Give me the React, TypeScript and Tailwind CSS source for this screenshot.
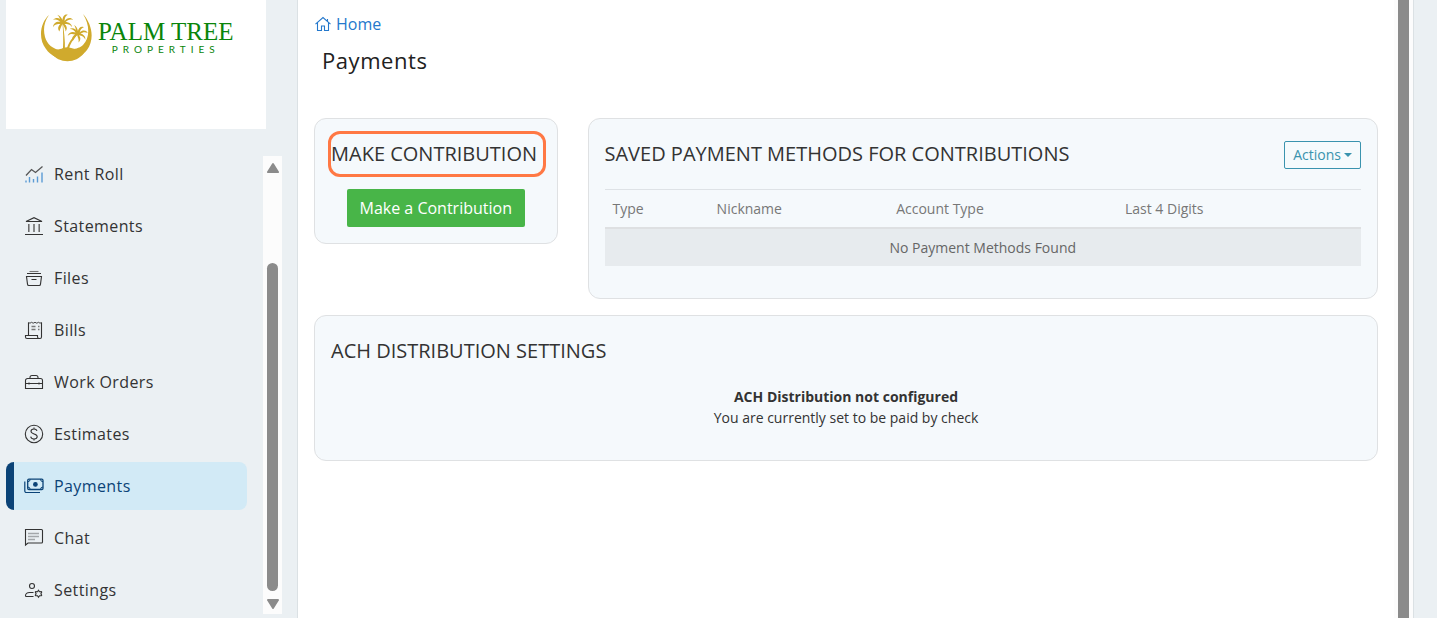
import clsx from "clsx";
import type { ReactNode } from "react";

type NavItem = {
  label: string;
  icon: ReactNode;
  active?: boolean;
};

function Icon({ children }: { children: ReactNode }) {
  return (
    <svg
      viewBox="0 0 20 20"
      className="size-5 shrink-0"
      fill="none"
      stroke="currentColor"
      strokeWidth="1.1"
      aria-hidden="true"
    >
      {children}
    </svg>
  );
}

const navItems: NavItem[] = [
  {
    label: "Rent Roll",
    icon: (
      <Icon>
        <path d="M2 11.5 7.5 5.5l4 3 7-6" strokeWidth="1.3" stroke="#555" />
        <path
          d="M2 16.5v2M5.5 13v5.5M9.5 15v3.5M13.5 12.5v6M18 8.5v10"
          stroke="#5b9bd5"
          strokeWidth="1.4"
        />
      </Icon>
    ),
  },
  {
    label: "Statements",
    icon: (
      <Icon>
        <path d="M2 5.500 10 1.700l8 3.800zM1 18.500h18" />
        <path d="M4.800 8v8M10 8v8M15.200 8v8" stroke="#666" strokeWidth="1.5" />
      </Icon>
    ),
  },
  {
    label: "Files",
    icon: (
      <Icon>
        <path d="M5.500 3.500h9" stroke="#777" />
        <path d="M3 5.500h14M2.500 8.500h15l-1 7.600a1.500 1.500 0 0 1-1.400 1.400H4.900a1.500 1.500 0 0 1-1.400-1.400zM7.500 11.500h5" />
      </Icon>
    ),
  },
  {
    label: "Bills",
    icon: (
      <Icon>
        <path d="M4.500 15V2.500M17.500 2.500v14.500a1.500 1.500 0 0 1-1.500 1.500H3A1.500 1.500 0 0 1 1.500 17v-1.500h12V17c0 1 .8 1.500 2 1.500" />
        <path
          d="m4.500 2.500 1.500.7 1.500-.9 1.700.9 1.800-.9 1.800.9 1.700-.9 1.500.9 1.500-.7"
          strokeWidth=".9"
        />
        <path
          d="M7.500 6.500h4M14 6.500h1.500M7.500 9.500h4M14 9.500h1.500"
          stroke="#777"
          strokeWidth="1.4"
        />
      </Icon>
    ),
  },
  {
    label: "Work Orders",
    icon: (
      <Icon>
        <path d="M1.500 16.500v-8a2 2 0 0 1 2-2h13a2 2 0 0 1 2 2v8zM1.500 11.500h17M6 6.500v-1a2 2 0 0 1 2-2h4a2 2 0 0 1 2 2v1M5 10.500v2M15 10.500v2" />
      </Icon>
    ),
  },
  {
    label: "Estimates",
    icon: (
      <Icon>
        <circle cx="10" cy="10" r="8.7" />
        <path d="M13 7c-.3-1.300-1.400-2-3-2-1.700 0-3 .8-3 2.300 0 3.400 6.200 1.900 6.200 5.300 0 1.500-1.300 2.400-3.200 2.400-1.800 0-3-.8-3.300-2.300M10 3.500V5M10 15v1.500" />
      </Icon>
    ),
  },
  {
    label: "Payments",
    active: true,
    icon: (
      <Icon>
        <rect x="3.700" y="3.200" width="15.300" height="10.300" rx="1.200" strokeWidth="1.3" />
        <path
          d="M3.700 5.700a2.500 2.500 0 0 0 2.500-2.500M19 5.700a2.500 2.500 0 0 1-2.500-2.500M3.700 11a2.500 2.500 0 0 1 2.500 2.500M19 11a2.500 2.500 0 0 0-2.500 2.500"
          strokeWidth="1"
        />
        <circle cx="11.400" cy="8.400" r="1.800" fill="currentColor" />
        <path d="M.8 5.500v9.500a1.500 1.500 0 0 0 1.500 1.500H16" strokeWidth="1.2" />
      </Icon>
    ),
  },
  {
    label: "Chat",
    icon: (
      <Icon>
        <path d="M1.500 1.500h16a1 1 0 0 1 1 1v11.500a1 1 0 0 1-1 1H4l-2.500 2z" />
        <path d="M4 5.500h11M4 8.500h11M4 11.500h7" stroke="#a3a7aa" strokeWidth="1.5" />
      </Icon>
    ),
  },
  {
    label: "Settings",
    icon: (
      <Icon>
        <circle cx="8" cy="6" r="2.5" />
        <path d="M9.500 12.500H5.500c-2.400 0-4 1.300-4 3.300 0 .5.200.7.700.7H9.500" />
        <path d="m14.500 10.200 1 1.500 1.800-.1.400.5-.8 1.600.8 1.600-.4.500-1.800-.1-1 1.500-1-1.500-1.800.1-.4-.5.800-1.600-.8-1.600.4-.5 1.800.1z" />
      </Icon>
    ),
  },
];

function PalmFronds() {
  return (
    <path d="M0 0C-2-4-6-5-9-2c3-1 5 0 7 2-3-1-7 1-7 5 2-3 4-3 7-3-2 2-3 4-1 7C-2 6-1 4 0 2c1 2 3 4 3 7C5 6 4 4 2 2c3 0 5 0 7 3C9 2 6 0 3 0c2-2 4-3 7-2C8-5 4-4 2-1c0-3 1-5 3-6C2-8 0-5 0-2c-1-2-2-4-5-5 2 2 3 4 3 6z" />
  );
}

function Logo() {
  return (
    <div className="flex h-[129px] w-[260px] items-start bg-white pt-[11px] pl-[34px]">
      <svg
        viewBox="0 0 54 52"
        className="h-[52px] w-[54px] shrink-0 fill-[#d0aa2d]"
        aria-hidden="true"
      >
        <path d="M9 4C0 12-2 28 6 38c9 13 31 14 41 1 8-11 5-26-4-36 7 11 7 24 0 31-4 4-9 3-12 6H23C12 38 7 33 5 26 3 18 4 11 9 4z" />
        <path d="M11 42c4-4 8-3 12-5 5-2 8 0 12 1 4 0 7 2 9 4-8 11-25 11-33 0z" />
        <path d="M22.800 11c1 9 2.500 18 2.100 28h-2c.6-10 .4-19-.6-28zM38 23c-5 5-8 10-9.500 16h-2C28 32 32 26 38 23z" />
        <g transform="translate(22.5 11) scale(1.05)">
          <PalmFronds />
        </g>
        <g transform="translate(37.5 22) rotate(12)">
          <PalmFronds />
        </g>
      </svg>
      <div className="ml-1 flex flex-col items-center pt-2 text-[#0a850a]">
        <span className="font-['Liberation_Serif',serif] text-[25px] leading-[25px]">
          PALM TREE
        </span>
        <span className="font-['Lato',sans-serif] text-[10px] leading-[10px] tracking-[5px]">
          PROPERTIES
        </span>
      </div>
    </div>
  );
}

function Sidebar() {
  return (
    <aside className="flex w-[298px] shrink-0 flex-col border-r border-[#dbe1e4] pl-1.5">
      <Logo />
      <div className="flex justify-between pt-[21px] pr-[15px]">
        <nav className="flex w-[241px] flex-col gap-1">
          {navItems.map(({ label, icon, active }) => (
            <a
              key={label}
              href="#"
              className={clsx(
                "flex h-12 items-center gap-2.5 rounded-lg border-l-8 pl-2.5 text-base tracking-wide",
                active
                  ? "border-[#0b4377] bg-[#d2eaf6] text-[#0b4377]"
                  : "border-transparent text-[#333]",
              )}
            >
              {icon}
              {label}
            </a>
          ))}
        </nav>
        <div className="mt-1.5 flex w-[19px] flex-col items-center justify-between bg-[#fcfcfc] pt-[7px] pb-[5px] text-[#8b8b8b]">
          <svg viewBox="0 0 12 10" className="h-2.5 w-3 fill-current" aria-hidden="true">
            <path d="M5.200.6a1 1 0 0 1 1.600 0l5 7.800a1 1 0 0 1-.8 1.600H1a1 1 0 0 1-.8-1.600z" />
          </svg>
          <div className="mt-auto mb-2 h-[328px] w-[11px] rounded-full bg-current" />
          <svg viewBox="0 0 12 10" className="h-2.5 w-3 fill-current" aria-hidden="true">
            <path d="M5.200 9.400a1 1 0 0 0 1.600 0l5-7.800A1 1 0 0 0 11 0H1a1 1 0 0 0-.8 1.600z" />
          </svg>
        </div>
      </div>
    </aside>
  );
}

function Card({ children, className }: { children: ReactNode; className?: string }) {
  return (
    <section
      className={clsx("rounded-xl border border-[#dfe1e3] bg-[#f5f9fc] px-4 pt-[22px]", className)}
    >
      {children}
    </section>
  );
}

function CardTitle({ children }: { children: ReactNode }) {
  return <h2 className="text-xl leading-[26px] whitespace-nowrap text-[#333]">{children}</h2>;
}

function ContributionCard() {
  return (
    <Card className="relative pb-4">
      <div className="absolute top-3 right-[11px] left-[13px] h-[46px] rounded-xl border-3 border-[#ff7844]" />
      <CardTitle>MAKE CONTRIBUTION</CardTitle>
      <div className="mt-[22px] flex justify-center">
        <button
          type="button"
          className="h-[38px] rounded-xs bg-[#48b548] px-[13px] font-medium whitespace-nowrap text-white"
        >
          Make a Contribution
        </button>
      </div>
    </Card>
  );
}

function PaymentMethodsCard() {
  return (
    <Card className="col-span-3 pb-8">
      <div className="flex items-start justify-between">
        <CardTitle>SAVED PAYMENT METHODS FOR CONTRIBUTIONS</CardTitle>
        <button
          type="button"
          className="flex h-7 items-center gap-[3px] rounded-xs border border-[#3a93ae] bg-[#f5fafc] px-2 text-sm text-[#3a93ae]"
        >
          Actions
          <svg viewBox="0 0 8 4" className="h-1 w-2 fill-current" aria-hidden="true">
            <path d="M0 0h8L4 4z" />
          </svg>
        </button>
      </div>
      <table className="mt-5 w-full text-sm">
        <thead>
          <tr className="h-[38px] border-t border-b-2 border-t-[#dee2e6] border-b-[#dee0e2] text-left text-[#777]">
            <th className="px-2 pt-0.5 font-normal">Type</th>
            <th className="px-2 pt-0.5 font-normal">Nickname</th>
            <th className="px-2 pt-0.5 font-normal">Account Type</th>
            <th className="px-2 pt-0.5 font-normal">Last 4 Digits</th>
            <td className="px-2" />
          </tr>
        </thead>
        <tbody>
          <tr className="h-[38px] bg-[#e7ebee]">
            <td colSpan={5} className="pt-0.5 text-center text-[#666]">
              No Payment Methods Found
            </td>
          </tr>
        </tbody>
      </table>
    </Card>
  );
}

function DistributionCard() {
  return (
    <Card className="mt-4 pb-8">
      <CardTitle>ACH DISTRIBUTION SETTINGS</CardTitle>
      <div className="mt-[22px] text-center text-sm leading-[21px] text-[#333]">
        <p className="font-bold">ACH Distribution not configured</p>
        <p>You are currently set to be paid by check</p>
      </div>
    </Card>
  );
}

export default function App() {
  return (
    <div className="flex h-screen overflow-hidden bg-[#ebf0f3] font-['Open_Sans',sans-serif]">
      <Sidebar />
      <main className="min-w-0 flex-1 bg-white px-4 pt-3">
        <a
          href="#"
          className="flex w-fit items-center gap-[5px] pl-px text-base leading-6 text-[#2478cc]"
        >
          <svg
            viewBox="0 0 16 16"
            className="size-4"
            fill="none"
            stroke="currentColor"
            strokeWidth="1.1"
            aria-hidden="true"
          >
            <path d="M.5 8.200 8 1.500l7.500 6.700M2.500 6.500v8h4v-4.500h3v4.500h4v-8M12.500 5.500V3" />
          </svg>
          Home
        </a>
        <h1 className="mt-2.5 pl-2 text-[22px] leading-7 font-medium tracking-wide text-[#212121]">
          Payments
        </h1>
        <div className="mt-11 grid grid-cols-4 items-start gap-x-[30px]">
          <ContributionCard />
          <PaymentMethodsCard />
        </div>
        <DistributionCard />
      </main>
      <div className="flex w-[19px] shrink-0 justify-center bg-[#fcfcfc]">
        <div className="h-full w-[11px] bg-[#8b8b8b]" />
      </div>
      <div className="w-6 shrink-0 border-l border-[#dbe1e4]" />
    </div>
  );
}
